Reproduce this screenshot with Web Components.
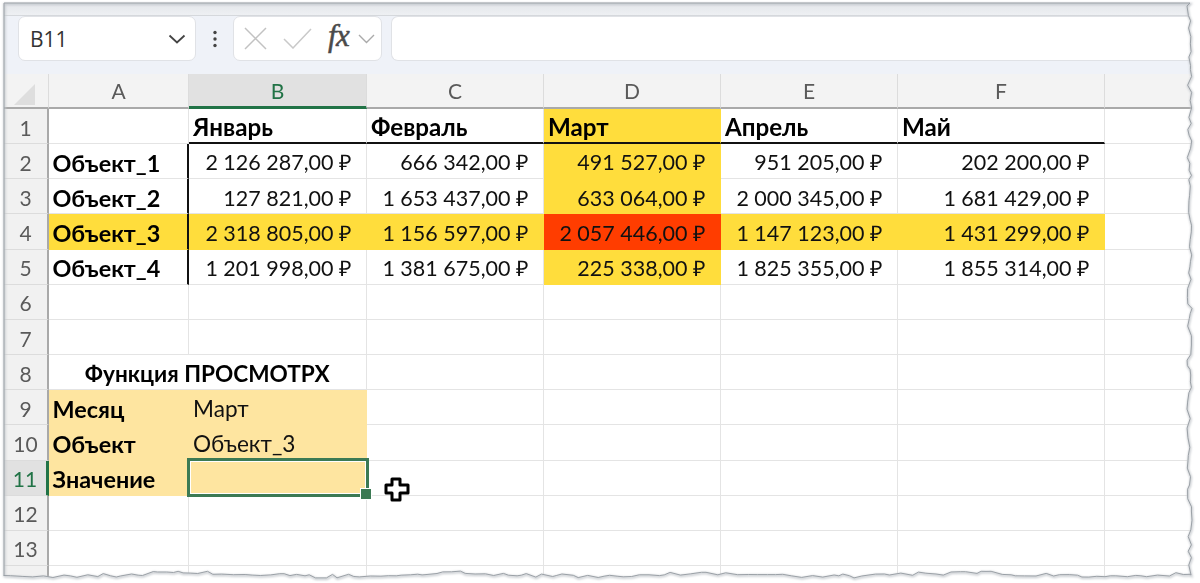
<!DOCTYPE html>
<html lang="ru"><head><meta charset="utf-8"><title>Excel</title>
<style>
html,body{margin:0;padding:0;background:#fff;overflow:hidden}
body{width:1200px;height:583px;position:relative;font-family:"Open Sans","Noto Sans",sans-serif}
x-window{width:1200px;height:583px}
</style></head><body>
<x-window>
  <x-formula-bar name="B11"></x-formula-bar>
  <x-sheet></x-sheet>
</x-window>
<script>
class XWindow extends HTMLElement{
  constructor(){super();const s=this.attachShadow({mode:'open'});
    let seed=7;const r=()=>{seed=(seed*16807)%2147483647;return seed/2147483647};
    let right=[],bottom=[];
    for(let y=6;y<572;y+=4+r()*6){right.push([1189.5+r()*5-2.5,y])}
    for(let x=1190;x>4;x-=4+r()*8){bottom.push([x,574.5+r()*4-2+Math.sin(x/41)*1.6])}
    const pts=[[4,3],[1190,3],...right,[1191,575],...bottom,[4,576]];
    const d='M'+pts.map(p=>p[0].toFixed(1)+' '+p[1].toFixed(1)).join('L');
    s.innerHTML=`<style>
      :host{display:block;position:relative;overflow:hidden;background:#fff}
      .in{display:flex;flex-direction:column;padding:3px 0 0 4px;width:1197px;height:580px;box-sizing:border-box;filter:blur(.45px)}
      .top{height:13px;background:linear-gradient(#e3e6ea,#eef0f3);border-bottom:1px solid #d5d8dc;flex:none;box-sizing:border-box}
      svg{position:absolute;left:0;top:0;pointer-events:none}
    </style>
    <div class="in"><div class="top"></div><slot></slot></div>
    <svg width="1200" height="583" viewBox="0 0 1200 583">
      <defs><filter id="b" x="-2%" y="-2%" width="104%" height="104%"><feGaussianBlur stdDeviation="1"/></filter></defs>
      <path fill="#fff" fill-rule="evenodd" d="M0 0H1200V583H0Z ${d}Z"/>
      <path fill="none" stroke="#c2c6cb" stroke-width="2" filter="url(#b)" transform="translate(.5 1)" d="${d}Z"/>
      <path fill="none" stroke="#9aa0a6" stroke-width="1" d="${d}Z"/>
    </svg>`;
  }
}
class XFormulaBar extends HTMLElement{
  constructor(){super();const s=this.attachShadow({mode:'open'});
    s.innerHTML=`<style>
      :host{display:flex;align-items:center;height:58px;flex:none;box-sizing:border-box;padding:0 0 13px 14px;background:#eff2f8;font-family:"Open Sans","Noto Sans",sans-serif}
      .box{background:#fff;border:1px solid #e0e2e6;border-radius:7px;height:45px;box-sizing:border-box;display:flex;align-items:center}
      .name{width:178px;padding:0 9px 0 11px;justify-content:space-between;font-size:21px;color:#333}
      .dots{width:37px;display:flex;justify-content:center}
      .fx{width:149px;justify-content:flex-start;padding-left:10px}
      .input{flex:1;margin-left:9px;border-right:none;border-radius:7px 0 0 7px}
      .f{font:italic 400 31px "Liberation Serif",serif;-webkit-text-stroke:.5px #4a4a4a;color:#4a4a4a;margin:-5px 9px 0 16px;letter-spacing:-.5px}
      svg{display:block;flex:none}
    </style>
    <div class="box name"><span>${this.getAttribute('name')}</span>
      <svg width="18" height="10" viewBox="0 0 18 10"><path d="M1.5 1.5 9 8.5 16.5 1.5" fill="none" stroke="#444" stroke-width="1.8"/></svg></div>
    <div class="dots"><svg width="4" height="18" viewBox="0 0 4 18"><circle cx="2" cy="2.5" r="1.7" fill="#444"/><circle cx="2" cy="9" r="1.7" fill="#444"/><circle cx="2" cy="15.5" r="1.7" fill="#444"/></svg></div>
    <div class="box fx">
      <svg width="23" height="23" viewBox="0 0 23 23"><path d="M1 1 22 22M22 1 1 22" fill="none" stroke="#c2c2c2" stroke-width="1.5"/></svg>
      <svg style="margin-left:16px" width="29" height="21" viewBox="0 0 29 21"><path d="M1 11 10 20 28 1" fill="none" stroke="#c9c9c9" stroke-width="1.5"/></svg>
      <span class="f">fx</span>
      <svg width="17" height="10" viewBox="0 0 17 10"><path d="M1 1 8.5 8.5 16 1" fill="none" stroke="#aaa" stroke-width="1.4"/></svg>
    </div>
    <div class="box input"></div>`;
  }
}
class XCell extends HTMLElement{
  constructor(){super();const s=this.attachShadow({mode:'open'});
    s.innerHTML=`<style>
      :host{display:flex;align-items:center;box-sizing:border-box;min-width:0;white-space:nowrap;overflow:visible;
        border-right:1.5px solid #e4e4e4;border-bottom:1.5px solid #e4e4e4;padding:4px 4px 0 4px;
        font:22.6px/1 "Lato","Open Sans",sans-serif;color:#111}
      :host([b]){font-weight:700;color:#000;font-size:23.4px;padding-left:3.5px}
      :host([h]){font-size:24.2px;padding-left:4px}
      :host([c]){justify-content:center;font-size:22.6px}
      :host([r]){justify-content:flex-end;padding-right:14px;font-size:21.5px}
    </style><slot></slot>`;
  }
}
class XHead extends HTMLElement{
  constructor(){super();const s=this.attachShadow({mode:'open'});
    s.innerHTML=`<style>
      :host{display:flex;align-items:center;justify-content:center;box-sizing:border-box;background:#f3f3f3;color:#5a5a5a;
        font:21px/1 "Lato","Open Sans",sans-serif;border-right:1.5px solid #dcdcdc;border-bottom:1.5px solid #dcdcdc}
      :host([row]){border-right:2px solid #a9a9a9;padding-top:2px;background:#f1f1f1}
      :host([col]){border-bottom:2px solid #a9a9a9}
      :host([sel]){background:#e1e1e1;color:#217346}
      :host([col][sel]){border-bottom:3px solid #217346}
      :host([row][sel]){border-right:3px solid #217346}
    </style><slot></slot>`;
  }
}
const T='\u00a0';
const data=[
 ['','Январь','Февраль','Март','Апрель','Май'],
 ['Объект_1','2 126 287,00 ₽','666 342,00 ₽','491 527,00 ₽','951 205,00 ₽','202 200,00 ₽'],
 ['Объект_2','127 821,00 ₽','1 653 437,00 ₽','633 064,00 ₽','2 000 345,00 ₽','1 681 429,00 ₽'],
 ['Объект_3','2 318 805,00 ₽','1 156 597,00 ₽','2 057 446,00 ₽','1 147 123,00 ₽','1 431 299,00 ₽'],
 ['Объект_4','1 201 998,00 ₽','1 381 675,00 ₽','225 338,00 ₽','1 825 355,00 ₽','1 855 314,00 ₽'],
];
class XSheet extends HTMLElement{
  constructor(){super();const s=this.attachShadow({mode:'open'});
    const Y='#ffdd3c',R='#ff3d00',P='#fee5a0';
    const cell=(txt,attrs='',bg='',extra='')=>`<x-cell ${attrs} style="${bg?`background:${bg};border-color:${bg};`:''}${extra}">${txt}</x-cell>`;
    let h=`<x-head col><svg width="22" height="22" viewBox="0 0 22 22" style="margin:8px 0 0 -3px"><path d="M21 0V21H0Z" fill="#dedede"/></svg></x-head>`;
    'ABCDEFG'.split('').forEach(c=>h+=`<x-head col ${c=='B'?'sel':''}>${c=='G'?'':c}</x-head>`);
    for(let r=1;r<=14;r++){
      h+=`<x-head row ${r==11?'sel':''}>${r==14?'':r}</x-head>`;
      for(let c=0;c<7;c++){
        let txt='',at='',bg='',ex='';
        if(r<=5&&c<6){
          txt=(data[r-1][c]||'').replace(/ /g,T);
          at=r==1?'b h':(c==0?'b':'r');
          if(c==3&&r!=4) bg=Y;
          if(r==4) bg=Y;
          if(c==3&&r==4) bg=R;
          if(r==1&&c>=1) ex+='border-bottom:2px solid #111;';
          if(r>=2&&c==0) ex+='border-right:2px solid #111;';
        }
        if(r==8&&c==0){h+=`<x-cell b c style="grid-column:span 2;">Функция${T}ПРОСМОТРХ</x-cell>`;continue}
        if(r==8&&c==1) continue;
        if(r>=9&&r<=11&&c<2){bg=P;
          if(c==0){at='b';txt=['Месяц','Объект','Значение'][r-9]}
          else txt=['Март','Объект_3',''][r-9];
        }
        h+=cell(txt,at,bg,ex);
      }
    }
    s.innerHTML=`<style>
      :host{display:block;position:relative;flex:1;min-height:0;overflow:hidden}
      .g{display:grid;grid-template-columns:45px 140px 178px 177px 177px 177px 207px 100px;grid-template-rows:35px repeat(14,35.17px)}
      .sel{position:absolute;left:183px;top:384px;width:182px;height:39px;box-sizing:border-box;border:3px solid #3c7a54}
      .sel::before{content:"";position:absolute;inset:0;border:1px solid #fff}
      .hdl{position:absolute;right:-6px;bottom:-6px;width:10px;height:10px;background:#3c7a54;border:1px solid #fff}
      .cur{position:absolute;left:379px;top:402px}
    </style>
    <div class="g">${h}</div>
    <div class="sel"><div class="hdl"></div></div>
    <svg class="cur" width="28" height="28" viewBox="0 0 28 28"><path d="M9 3H17V9H25V17H17V24H9V17H3V9H9Z" fill="#fff" stroke="#000" stroke-width="3" stroke-linejoin="round"/></svg>`;
  }
}
customElements.define('x-window',XWindow);
customElements.define('x-formula-bar',XFormulaBar);
customElements.define('x-cell',XCell);
customElements.define('x-head',XHead);
customElements.define('x-sheet',XSheet);
</script>
</body></html>
